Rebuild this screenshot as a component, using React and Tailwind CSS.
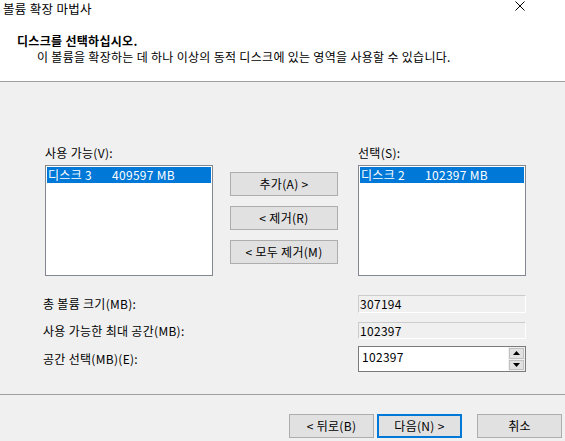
import React from 'react';

const font = "font-['Malgun_Gothic','Noto_Sans_CJK_KR',sans-serif]";

const ListBox = ({ name, size }) => (
  <div className="h-[111px] w-[168px] border border-[#828790] bg-white p-px">
    <div className="flex h-4 items-center bg-[#0078d7] pl-[1px] text-white">
      <span className="w-16">{name}</span>
      <span>{size}</span>
    </div>
  </div>
);

const Btn = ({ children, primary }) => (
  <button
    className={
      primary
        ? 'flex h-6 w-[85px] items-center justify-center border-2 border-[#0078d7] bg-[#e1e1e1]'
        : 'flex h-6 w-[85px] items-center justify-center border border-[#adadad] bg-[#e1e1e1]'
    }
  >
    {children}
  </button>
);

const MoveBtn = ({ children }) => (
  <button className="flex h-6 w-[108px] items-center justify-center border border-[#adadad] bg-[#e1e1e1]">
    {children}
  </button>
);

const App = () => {
  return (
    <div className={`${font} flex h-[441px] w-[565px] flex-col overflow-hidden bg-[#f0f0f0] text-[12px] leading-4 tracking-[0.3px] text-black`}>
      {/* 머리글 */}
      <div className="h-[81px] shrink-0 bg-white">
        <div className="flex items-start justify-between pl-[3px] pr-[40px] pt-[1px]">
          <span className="text-[12.5px]">볼륨 확장 마법사</span>
          <svg width="10" height="10" viewBox="0 0 10 10">
            <path d="M0.5 0.5 L9.5 9.5 M9.5 0.5 L0.5 9.5" stroke="#000" strokeWidth="1" />
          </svg>
        </div>
        <div className="mt-[16px] pl-[17px] font-bold">디스크를 선택하십시오.</div>
        <div className="pl-[37px]">이 볼륨을 확장하는 데 하나 이상의 동적 디스크에 있는 영역을 사용할 수 있습니다.</div>
      </div>
      <div className="h-px shrink-0 bg-[#a0a0a0]" />

      {/* 본문 */}
      <div className="flex-1 pl-[45px] pt-[63px]">
        <div className="flex items-start">
          <div className="flex flex-col">
            <span className="mb-[4px]">사용 가능(V):</span>
            <ListBox name="디스크 3" size="409597 MB" />
          </div>
          <div className="ml-[17px] mt-[27px] flex flex-col gap-[10px]">
            <MoveBtn>추가(A) &gt;</MoveBtn>
            <MoveBtn>&lt; 제거(R)</MoveBtn>
            <MoveBtn>&lt; 모두 제거(M)</MoveBtn>
          </div>
          <div className="ml-[20px] flex flex-col">
            <span className="mb-[4px]">선택(S):</span>
            <ListBox name="디스크 2" size="102397 MB" />
          </div>
        </div>

        <div className="-ml-[2px] mt-[19px] flex flex-col">
          <div className="flex items-center">
            <span className="w-[315px]">총 볼륨 크기(MB):</span>
            <div className="flex h-[18px] w-[168px] items-center border border-[#cccccc] border-b-white border-r-white pl-[1px]">307194</div>
          </div>
          <div className="mt-[9px] flex items-center">
            <span className="w-[315px]">사용 가능한 최대 공간(MB):</span>
            <div className="flex h-[17px] w-[168px] items-center border border-[#cccccc] border-b-white border-r-white pl-[1px]">102397</div>
          </div>
          <div className="mt-[7px] flex items-center">
            <span className="w-[315px]">공간 선택(MB)(E):</span>
            <div className="flex h-[26px] w-[168px] border border-[#7a7a7a] bg-white">
              <span className="flex-1 pl-[3px] pt-[2px]">102397</span>
              <div className="flex w-[17px] flex-col gap-px bg-[#f0f0f0] p-px">
                <div className="flex flex-1 items-center justify-center border border-[#c0c0c0] bg-[#e1e1e1]">
                  <svg width="7" height="4" viewBox="0 0 7 4"><path d="M3.5 0 L7 4 L0 4 Z" fill="#000" /></svg>
                </div>
                <div className="flex flex-1 items-center justify-center border border-[#c0c0c0] bg-[#e1e1e1]">
                  <svg width="7" height="4" viewBox="0 0 7 4"><path d="M0 0 L7 0 L3.5 4 Z" fill="#000" /></svg>
                </div>
              </div>
            </div>
          </div>
        </div>
      </div>

      {/* 하단 버튼 */}
      <div className="h-px shrink-0 bg-[#a0a0a0]" />
      <div className="flex h-[46px] shrink-0 items-start justify-end pr-[3px] pt-[19px]">
        <Btn>&lt; 뒤로(B)</Btn>
        <div className="ml-[3px]">
          <Btn primary>다음(N) &gt;</Btn>
        </div>
        <div className="ml-[15px]">
          <Btn>취소</Btn>
        </div>
      </div>
    </div>
  );
};

export default App;
